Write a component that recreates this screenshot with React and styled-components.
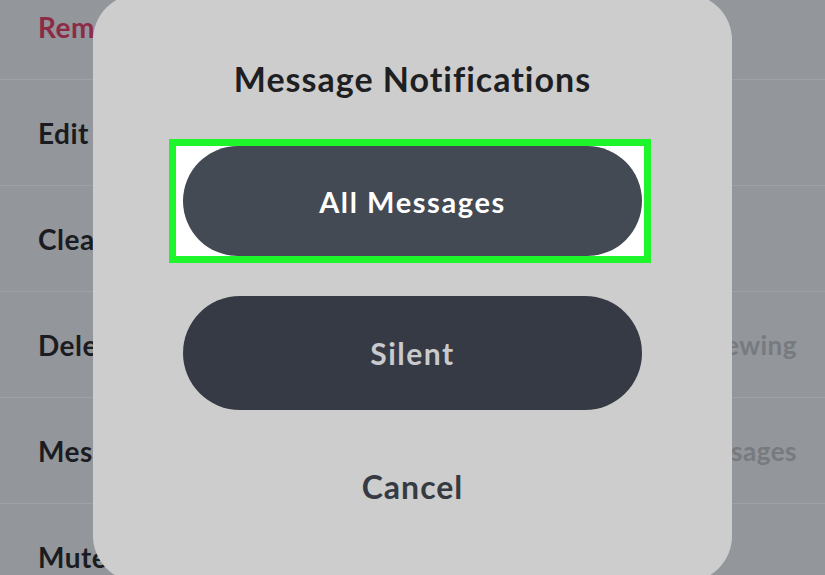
import styled, { createGlobalStyle } from "styled-components";

const GlobalStyle = createGlobalStyle`
  html, body {
    margin: 0;
    padding: 0;
    width: 825px;
    height: 575px;
    overflow: hidden;
    background: #93969a;
    font-family: Lato, "Open Sans", sans-serif;
  }
`;

const Screen = styled.div`
  position: relative;
  width: 825px;
  height: 575px;
  overflow: hidden;
`;

const SettingsList = styled.div`
  display: flex;
  flex-direction: column;
  margin-top: -26px;
`;

const SettingsRow = styled.div`
  display: flex;
  justify-content: space-between;
  align-items: center;
  height: 106px;
  padding: 0 28px 0 38px;
  border-bottom: 1px solid #9ea1a5;
  box-sizing: border-box;
`;

const RowLabel = styled.span`
  font-size: 28px;
  font-weight: 700;
  letter-spacing: 0.5px;
  color: ${(p) => (p.$danger ? "#8d2b46" : "#1b1c21")};
`;

const RowValue = styled.span`
  font-size: 26px;
  font-weight: 700;
  letter-spacing: 0.5px;
  color: #777a7f;
`;

const Sheet = styled.div`
  position: absolute;
  left: 93px;
  top: -6px;
  width: 639px;
  height: 588px;
  background: #cdcdcd;
  border-radius: 46px;
  display: flex;
  flex-direction: column;
  align-items: center;
  box-sizing: border-box;
  padding-top: 64px;
`;

const Title = styled.h1`
  margin: 0;
  font-size: 34px;
  font-weight: 700;
  letter-spacing: 1px;
  color: #1e1f23;
  line-height: 42px;
`;

const Highlight = styled.div`
  margin-top: 39px;
  margin-left: -5px;
  border: 7px solid #1ef52a;
  background: #ffffff;
  padding: 0 2px 0 7px;
  display: flex;
`;

const PillButton = styled.button`
  width: 459px;
  height: ${(p) => p.$height}px;
  border: none;
  border-radius: 60px;
  background: ${(p) => p.$bg};
  color: ${(p) => p.$fg};
  font-family: inherit;
  font-size: ${(p) => p.$size}px;
  font-weight: 700;
  letter-spacing: ${(p) => p.$spacing}px;
  display: flex;
  align-items: center;
  justify-content: center;
  padding: 0;
`;

const SilentWrap = styled.div`
  margin-top: 33px;
`;

const CancelButton = styled.button`
  margin-top: 57px;
  border: none;
  background: none;
  font-family: inherit;
  font-size: 32px;
  font-weight: 700;
  letter-spacing: 1px;
  color: #353a43;
  padding: 0;
`;

const rows = [
  { label: "Remove Friend", danger: true },
  { label: "Edit Name" },
  { label: "Clear from Chat Feed" },
  { label: "Delete Chats", value: "After Viewing" },
  { label: "Message Notifications", value: "All Messages" },
  { label: "Mute Story" },
];

export default function App() {
  return (
    <Screen>
      <GlobalStyle />
      <SettingsList>
        {rows.map((r) => (
          <SettingsRow key={r.label}>
            <RowLabel $danger={r.danger}>{r.label}</RowLabel>
            {r.value && <RowValue>{r.value}</RowValue>}
          </SettingsRow>
        ))}
      </SettingsList>
      <Sheet>
        <Title>Message Notifications</Title>
        <Highlight>
          <PillButton $height={110} $size={29} $spacing={1.6} $bg="#434a54" $fg="#ffffff">
            All Messages
          </PillButton>
        </Highlight>
        <SilentWrap>
          <PillButton $height={114} $size={30} $spacing={1.5} $bg="#363a44" $fg="#c9cacd">
            Silent
          </PillButton>
        </SilentWrap>
        <CancelButton>Cancel</CancelButton>
      </Sheet>
    </Screen>
  );
}
